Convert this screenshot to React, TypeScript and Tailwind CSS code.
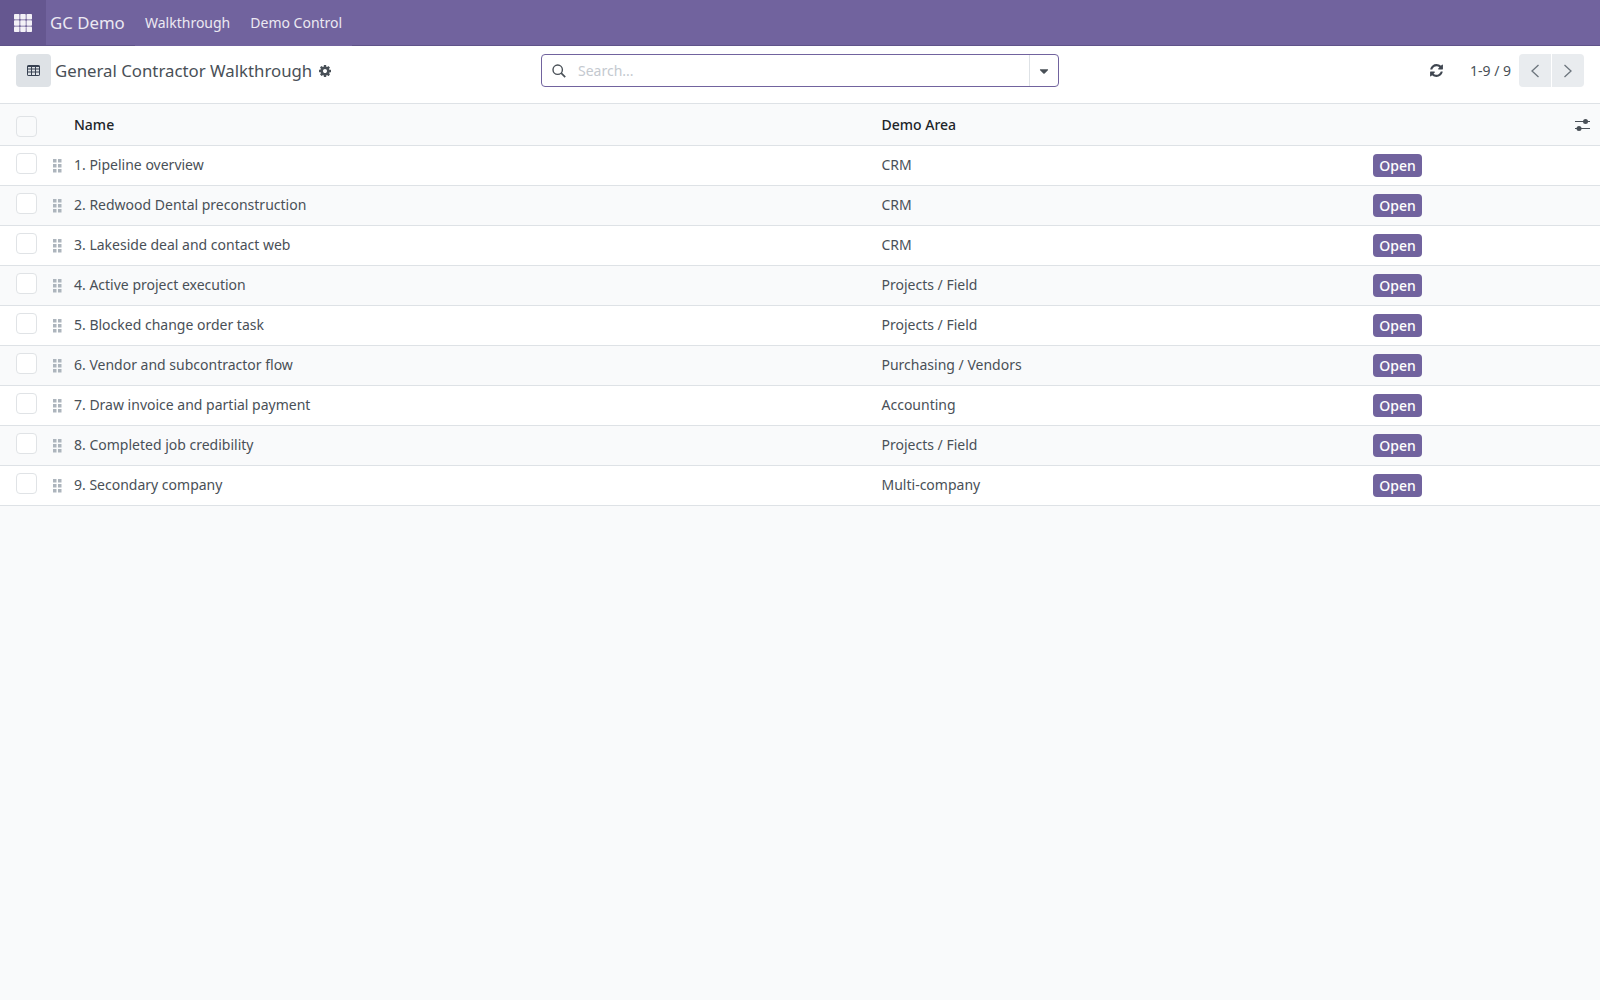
import { FC } from 'react';
import { FaCaretDown } from 'react-icons/fa';

const rows = [
  ['1. Pipeline overview', 'CRM'],
  ['2. Redwood Dental preconstruction', 'CRM'],
  ['3. Lakeside deal and contact web', 'CRM'],
  ['4. Active project execution', 'Projects / Field'],
  ['5. Blocked change order task', 'Projects / Field'],
  ['6. Vendor and subcontractor flow', 'Purchasing / Vendors'],
  ['7. Draw invoice and partial payment', 'Accounting'],
  ['8. Completed job credibility', 'Projects / Field'],
  ['9. Secondary company', 'Multi-company'],
];

const AppsIcon = () => (
  <svg width="18" height="18" viewBox="0 0 18 18" fill="currentColor">
    {[0, 6.25, 12.5].map((y) =>
      [0, 6.25, 12.5].map((x) => <rect key={`${x}-${y}`} x={x} y={y} width="5.5" height="5.5" rx="0.8" />),
    )}
  </svg>
);

const TableIcon = () => (
  <svg width="13" height="11" viewBox="0 0 13 11" fill="none" stroke="currentColor" strokeWidth="1">
    <rect x="0.5" y="0.5" width="12" height="10" rx="0.6" />
    <path d="M0.5 1.5h12" />
    <path d="M0.5 4h12M0.5 7h12M4.5 1.5v9M8.5 1.5v9" />
  </svg>
);

const CogIcon = () => (
  <svg width="14" height="14" viewBox="0 0 1792 1792" fill="#495057">
    <path d="M1152 896q0-106-75-181t-181-75-181 75-75 181 75 181 181 75 181-75 75-181zm512-109v222q0 12-8 23t-20 13l-185 28q-19 54-39 91 35 50 107 138 10 12 10 25t-9 23q-27 37-99 108t-94 71q-12 0-26-9l-138-108q-44 23-91 38-16 136-29 186-7 28-36 28h-222q-14 0-24.5-8.5t-11.5-21.5l-28-184q-49-16-90-37l-141 107q-10 9-25 9-14 0-25-11-126-114-165-168-7-10-7-23 0-12 8-23 15-21 51-66.5t54-70.5q-27-50-41-99l-183-27q-13-2-21-12.5t-8-23.5v-222q0-12 8-23t19-13l186-28q14-46 39-92-40-57-107-138-10-12-10-24 0-10 9-23 26-36 98.5-107.5t94.5-71.5q13 0 26 10l138 107q44-23 91-38 16-136 29-186 7-28 36-28h222q14 0 24.5 8.5t11.5 21.5l28 184q49 16 90 37l142-107q9-9 24-9 13 0 25 10 129 119 165 170 7 8 7 22 0 12-8 23-15 21-51 66.5t-54 70.5q26 50 41 98l183 28q13 2 21 12.5t8 23.5z" />
  </svg>
);

const RefreshIcon = () => (
  <svg width="15" height="15" viewBox="0 0 1792 1792" fill="#3f4650">
    <path d="M1639 1056q0 5-1 7-64 268-268 434.5t-478 166.5q-146 0-282.5-55t-243.5-157l-129 129q-19 19-45 19t-45-19-19-45v-448q0-26 19-45t45-19h448q26 0 45 19t19 45-19 45l-137 137q71 66 161 102t187 36q134 0 250-65t186-179q11-17 53-117 8-23 30-23h192q13 0 22.5 9.5t9.5 22.5zm25-800v448q0 26-19 45t-45 19h-448q-26 0-45-19t-19-45 19-45l138-138q-148-137-349-137-134 0-250 65t-186 179q-11 17-53 117-8 23-30 23h-199q-13 0-22.5-9.5t-9.5-22.5v-7q65-268 270-434.5t480-166.5q146 0 284 55.5t245 156.5l130-129q19-19 45-19t45 19 19 45z" />
  </svg>
);

const SearchIcon = () => (
  <svg width="14" height="14" viewBox="0 0 14 14" fill="none" stroke="#495057" strokeWidth="1.4">
    <circle cx="5.7" cy="5.7" r="4.7" />
    <path d="M9.2 9.2 L13.2 13.2" strokeWidth="1.7" />
  </svg>
);

const Grip = () => (
  <svg width="9" height="14" viewBox="0 0 9 14" fill="#adb5bd">
    {[0, 5, 10].map((y) =>
      [0, 5].map((x) => <rect key={`${x}-${y}`} x={x} y={y} width="3.5" height="3.5" />),
    )}
  </svg>
);

const Sliders = () => (
  <svg width="15" height="14" viewBox="0 0 15 14" fill="#495057">
    <rect x="0" y="3" width="15" height="1" />
    <rect x="0" y="10" width="15" height="1" />
    <circle cx="10.5" cy="3.5" r="2.5" />
    <circle cx="4" cy="10.5" r="2.5" />
  </svg>
);

const Chevron: FC<{ dir: 'left' | 'right' }> = ({ dir }) => (
  <svg width="10" height="14" viewBox="0 0 10 14" fill="none" stroke="#6c757d" strokeWidth="1.3">
    <path d={dir === 'left' ? 'M8.5 1 L2 7 L8.5 13' : 'M1.5 1 L8 7 L1.5 13'} />
  </svg>
);

const Check: FC<{ clear?: boolean }> = ({ clear }) => (
  <span className={`block w-[21px] h-[21px] rounded-[4px] border border-[#e0e3e6] ${clear ? 'bg-transparent' : 'bg-white'}`} />
);

export default function App() {
  return (
    <div className="min-h-screen bg-[#f9fafb] font-['Noto_Sans',sans-serif] text-[14px] text-[#495057]">
      <nav className="h-[46px] bg-[#71639e] border-b border-[#5f5389] flex items-stretch text-white">
        <div className="w-[46px] flex items-center justify-center bg-[#655790] text-[#f3f1f7]">
          <AppsIcon />
        </div>
        <div className="w-[89px] pl-[4px] flex items-center text-[16.8px] text-[#ece9f2]">GC Demo</div>
        <div className="flex -mb-px pb-px bg-[#71639e]">
          <div className="px-[10px] flex items-center text-[#ece9f2]">Walkthrough</div>
          <div className="px-[10px] flex items-center text-[#ece9f2]">Demo Control</div>
        </div>
      </nav>

      <div className="h-[58px] bg-white border-b border-[#dee2e6] flex items-start pt-[8px] pl-[16px] pr-[16px]">
        <div className="w-[525px] flex items-center">
          <div className="w-[35px] h-[33px] rounded-[4px] bg-[#dee2e6] flex items-center justify-center text-[#374151]">
            <TableIcon />
          </div>
          <span className="ml-[4px] text-[16.8px] text-[#495057]">General Contractor Walkthrough</span>
          <span className="ml-[6px] flex">
            <CogIcon />
          </span>
        </div>
        <div className="w-[518px] h-[33px] rounded-[4px] border border-[#71639e] flex items-center">
          <span className="ml-[10px] flex">
            <SearchIcon />
          </span>
          <span className="ml-[12px] flex-1 text-[#c4c9cf]">Search...</span>
          <div className="w-[29px] h-full border-l border-[#dee2e6] flex items-center justify-center text-[#495057]">
            <FaCaretDown className="text-[14px]" />
          </div>
        </div>
        <div className="ml-auto flex items-center h-[33px]">
          <RefreshIcon />
          <span className="ml-[26px]">1-9 / 9</span>
          <div className="ml-[8px] flex gap-px">
            <div className="w-[32px] h-[33px] rounded-l-[4px] bg-[#e9ecef] flex items-center justify-center">
              <Chevron dir="left" />
            </div>
            <div className="w-[32px] h-[33px] rounded-r-[4px] bg-[#e9ecef] flex items-center justify-center">
              <Chevron dir="right" />
            </div>
          </div>
        </div>
      </div>

      <div className="h-[42px] border-b border-[#dee2e6] bg-[#f9fafb] flex items-center text-[#212529] font-medium">
        <div className="w-[74px] pl-[16px] mt-[3px]">
          <Check clear />
        </div>
        <div className="w-[807.5px]">Name</div>
        <div className="flex-1">Demo Area</div>
        <div className="pr-[10px]">
          <Sliders />
        </div>
      </div>

      {rows.map(([name, area], i) => (
        <div
          key={name}
          className={`h-[40px] border-b border-[#dee2e6] flex items-center ${i % 2 === 1 ? 'bg-[#f9fafb]' : 'bg-white'}`}
        >
          <div className="w-[52px] pl-[16px] -mt-[4px]">
            <Check />
          </div>
          <div className="w-[22px] pl-[1px] flex">
            <Grip />
          </div>
          <div className="w-[807.5px] -mt-[2px]">{name}</div>
          <div className="w-[491.5px] -mt-[2px]">{area}</div>
          <span className="h-[23px] w-[49px] rounded-[4px] bg-[#71639e] text-white font-medium flex items-center justify-center">
            Open
          </span>
        </div>
      ))}
    </div>
  );
}
